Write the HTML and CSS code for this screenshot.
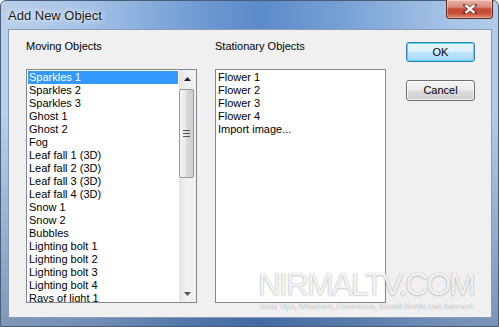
FILE: index.html
```html
<!DOCTYPE html>
<html>
<head>
<meta charset="utf-8">
<link rel="stylesheet" href="styles.css">
</head>
<body>
<div class="window">
  <div class="titlebar">
    <span class="title">Add New Object</span>
    <div class="close">
      <svg width="14" height="10" viewBox="0 0 14 10">
        <path d="M2 1 L12 9 M12 1 L2 9" stroke="#3a1410" stroke-width="4" stroke-linecap="square" fill="none" opacity="0.55"/>
        <path d="M2.5 1.2 L11.5 8.8 M11.5 1.2 L2.5 8.8" stroke="#ffffff" stroke-width="2.4" fill="none"/>
      </svg>
    </div>
  </div>
  <div class="client">
    <div class="col">
      <div class="label">Moving Objects</div>
      <div class="listbox">
        <ul class="items">
          <li class="selected">Sparkles 1</li>
          <li>Sparkles 2</li>
          <li>Sparkles 3</li>
          <li>Ghost 1</li>
          <li>Ghost 2</li>
          <li>Fog</li>
          <li>Leaf fall 1 (3D)</li>
          <li>Leaf fall 2 (3D)</li>
          <li>Leaf fall 3 (3D)</li>
          <li>Leaf fall 4 (3D)</li>
          <li>Snow 1</li>
          <li>Snow 2</li>
          <li>Bubbles</li>
          <li>Lighting bolt 1</li>
          <li>Lighting bolt 2</li>
          <li>Lighting bolt 3</li>
          <li>Lighting bolt 4</li>
          <li>Rays of light 1</li>
        </ul>
        <div class="scrollbar">
          <div class="sb-btn">
            <svg width="7" height="4" viewBox="0 0 7 4"><path d="M3.5 0 L7 4 L0 4 Z" fill="#222"/></svg>
          </div>
          <div class="thumb">
            <svg width="7" height="7" viewBox="0 0 7 7"><path d="M0 0.5H7M0 3.5H7M0 6.5H7" stroke="#555" stroke-width="1"/></svg>
          </div>
          <div class="track"></div>
          <div class="sb-btn">
            <svg width="7" height="4" viewBox="0 0 7 4"><path d="M0 0 L7 0 L3.5 4 Z" fill="#555"/></svg>
          </div>
        </div>
      </div>
    </div>
    <div class="col col-second">
      <div class="label">Stationary Objects</div>
      <div class="listbox">
        <ul class="items plain">
          <li>Flower 1</li>
          <li>Flower 2</li>
          <li>Flower 3</li>
          <li>Flower 4</li>
          <li>Import image...</li>
        </ul>
      </div>
    </div>
    <div class="buttons">
      <div class="btn btn-default">OK</div>
      <div class="btn">Cancel</div>
    </div>
    <div class="watermark">
      <div class="wm-big">NIRMALTV.COM</div>
      <div class="wm-small">Tech Tips, Windows, Freewares, Social Media and Internet</div>
    </div>
  </div>
</div>
</body>
</html>
```

FILE: styles.css
```css
* { box-sizing: border-box; }
html, body { margin: 0; padding: 0; }
body {
  width: 499px;
  height: 327px;
  overflow: hidden;
  font-family: "Liberation Sans", Arial, sans-serif;
  font-size: 11px;
  color: #000;
}
.window {
  width: 499px;
  height: 327px;
  display: flex;
  flex-direction: column;
  border: 1px solid #4a5d78;
  border-radius: 6px 6px 0 0;
  background:
    linear-gradient(180deg, rgba(255,255,255,0) 0%, rgba(255,255,255,0) 35%, rgba(20,45,90,0.35) 100%),
    linear-gradient(90deg, #b9d0ea 0%, #a4c1e6 18%, #6f9ad2 40%, #5b8bc9 52%, #7aa3d6 70%, #a6c3e6 90%, #b2cbe9 100%);
}
.titlebar {
  height: 28px;
  display: flex;
  justify-content: space-between;
  align-items: flex-start;
}
.title {
  margin: 8px 0 0 7px;
  font-family: "Liberation Sans", Arial, sans-serif;
  font-size: 13px;
  line-height: 14px;
  color: #1a1a1a;
  text-shadow: 0 0 6px rgba(255,255,255,0.9), 0 0 3px rgba(255,255,255,0.8);
}
.close {
  width: 47px;
  height: 19px;
  margin: -1px 5px 0 0;
  border: 1px solid #5a2a25;
  border-top: none;
  border-radius: 0 0 4px 4px;
  display: flex;
  align-items: center;
  justify-content: center;
  background: linear-gradient(180deg, #e9b3a5 0%, #d88a78 40%, #c24a36 50%, #c9503a 75%, #e08a6c 100%);
  box-shadow: inset 0 0 0 1px rgba(255,255,255,0.35);
}
.client {
  flex: 1;
  margin: 0 6px 8px 7px;
  background: #f0f0f0;
  border: 1px solid #8a9cb5;
  padding: 10px 0 0 17px;
  display: flex;
  align-items: flex-start;
  position: relative;
}
.col {
  width: 171px;
  display: flex;
  flex-direction: column;
}
.col-second { margin-left: 18px; }
.label {
  line-height: 13px;
  height: 13px;
  margin-bottom: 16px;
  padding-left: 0;
}
.listbox {
  height: 234px;
  border: 1px solid #828790;
  background: #fff;
  display: flex;
  overflow: hidden;
}
.items {
  list-style: none;
  margin: 0;
  padding: 1px 1px 0 1px;
  flex: 1;
}
.items li {
  height: 13px;
  line-height: 13px;
  padding-left: 1px;
  white-space: nowrap;
}
.items li.selected {
  background: #3399ff;
  color: #fff;
}
.items.plain li { padding-left: 1px; }
.scrollbar {
  width: 17px;
  display: flex;
  flex-direction: column;
  background: linear-gradient(90deg, #e3e3e3 0%, #f1f1f1 40%, #f1f1f1 100%);
}
.sb-btn {
  height: 17px;
  display: flex;
  align-items: center;
  justify-content: center;
}
.thumb {
  height: 89px;
  margin: 2px 2px 0 0;
  border: 1px solid #999;
  border-radius: 2px;
  background: linear-gradient(90deg, #f4f4f4 0%, #e8e8e8 45%, #d6d6d6 55%, #cfcfcf 100%);
  display: flex;
  align-items: center;
  justify-content: center;
}
.track { flex: 1; }
.buttons {
  margin-left: 20px;
  margin-top: 2px;
  width: 69px;
  display: flex;
  flex-direction: column;
  gap: 18px;
}
.btn {
  height: 21px;
  border: 1px solid #707070;
  border-radius: 3px;
  background: linear-gradient(180deg, #f3f3f3 0%, #ebebeb 48%, #dddddd 52%, #cfcfcf 100%);
  box-shadow: inset 0 0 0 1px rgba(255,255,255,0.7);
  display: flex;
  align-items: center;
  justify-content: center;
  line-height: 13px;
}
.btn-default {
  height: 20px;
  border-color: #3c7fb1;
  background: linear-gradient(180deg, #eaf6fd 0%, #d9f0fc 48%, #bee6fd 52%, #a7d9f5 100%);
  box-shadow: inset 0 0 0 1px #48d8fb;
}
.watermark {
  position: absolute;
  left: 238px;
  top: 240px;
  width: 238px;
  text-align: center;
  pointer-events: none;
}
.wm-big {
  font-family: "Liberation Sans", Arial, sans-serif;
  font-size: 32px;
  line-height: 29px;
  height: 29px;
  letter-spacing: -2px;
  color: rgba(255,255,255,0.9);
  text-shadow: 0 0 1px rgba(0,0,0,0.35), 0 1px 2px rgba(0,0,0,0.15);
}
.wm-small {
  margin-top: 4px;
  font-family: "Liberation Sans", Arial, sans-serif;
  font-size: 7.5px;
  font-weight: bold;
  line-height: 8px;
  letter-spacing: 0.1px;
  color: rgba(255,255,255,0.9);
  text-shadow: 0 0 1px rgba(0,0,0,0.45);
}
```
